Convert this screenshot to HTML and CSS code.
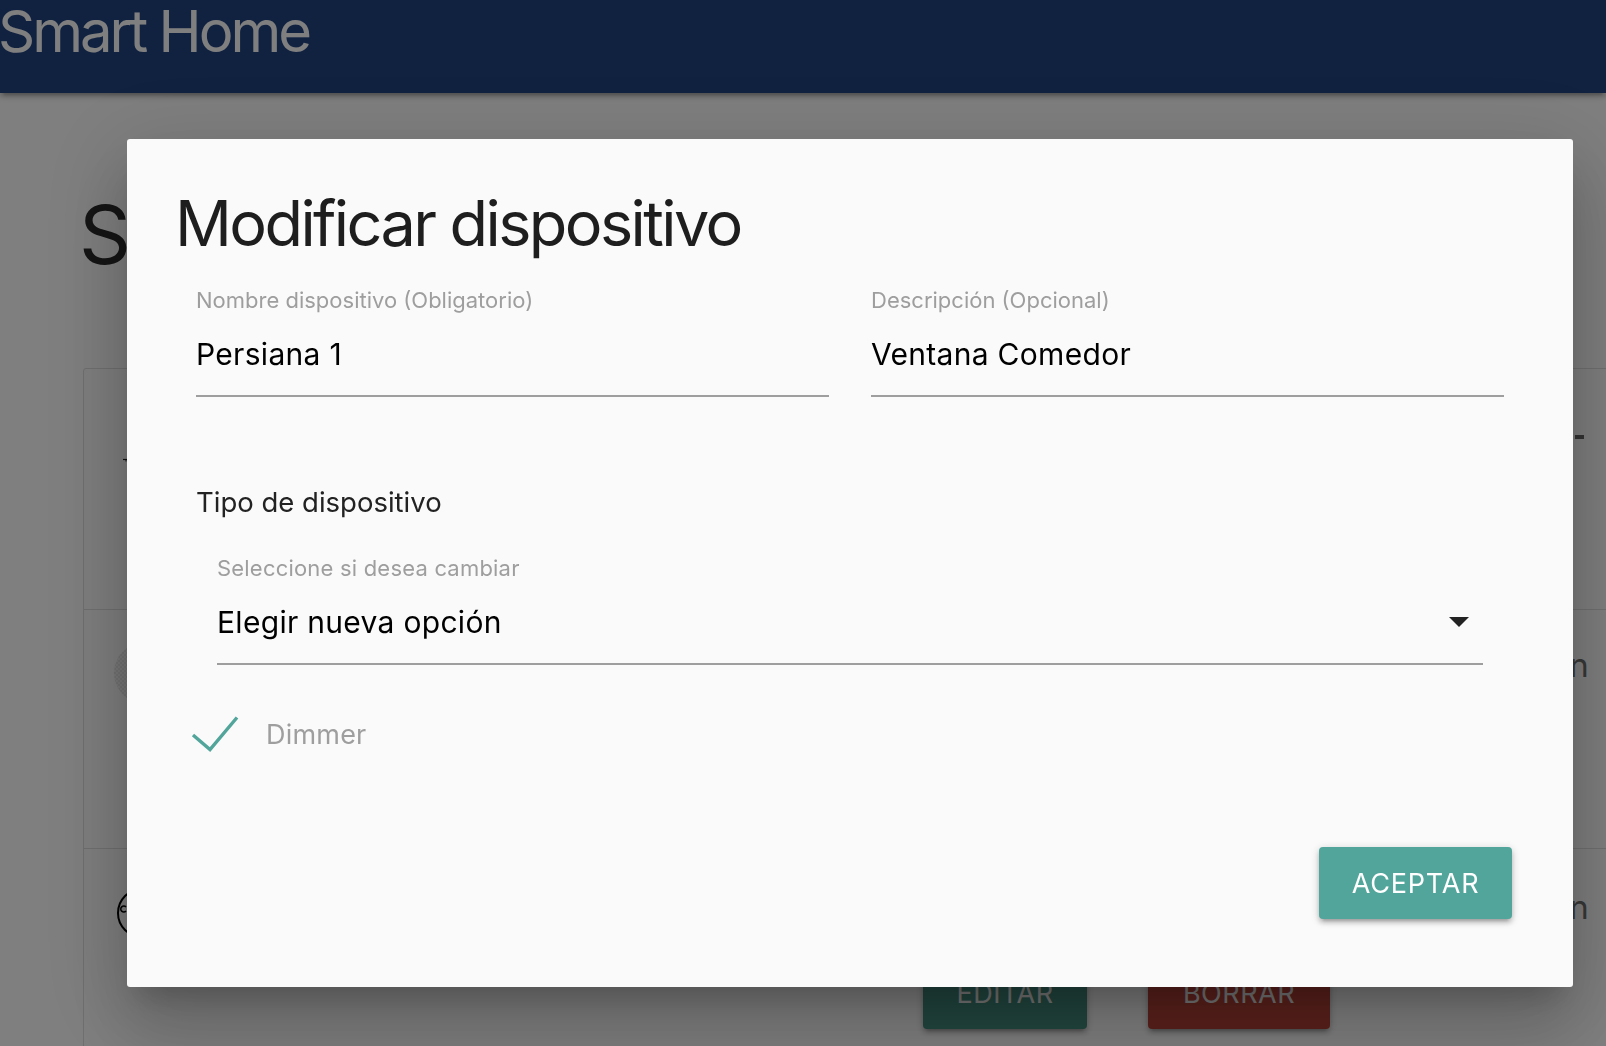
FILE: index.html
```html
<!DOCTYPE html>
<html lang="es">
<head>
<meta charset="utf-8">
<title>Smart Home</title>
<link rel="stylesheet" href="styles.css">
</head>
<body>
<header class="navbar">
  <span class="brand">Smart Home</span>
</header>
<main class="page">
  <h1 class="page-title">Smart Home</h1>
  <div class="collection">
    <div class="item item-first">
      <div class="item-left"><svg class="stub" width="12" height="4" viewBox="0 0 12 4"><path d="M0 1.5h12" stroke="#222" stroke-width="1.2"/><path d="M3 1.5v2" stroke="#222" stroke-width="1"/></svg></div>
      <div class="item-main"></div>
      <div class="item-right"><span class="lever"></span></div>
    </div>
    <div class="item item-second">
      <div class="item-left"><span class="avatar"></span></div>
      <div class="item-main"></div>
      <div class="item-right"><span class="state">On</span></div>
    </div>
    <div class="item item-third">
      <div class="item-left"><svg class="device-icon" width="52" height="52" viewBox="0 0 52 52"><circle cx="26" cy="26" r="24" fill="none" stroke="#000" stroke-width="2"/><path d="M10 20a3 3 0 1 0 0 4" fill="none" stroke="#000" stroke-width="1.5"/></svg></div>
      <div class="item-main">
        <div class="item-actions">
          <span class="btn btn-edit">EDITAR</span>
          <span class="btn btn-delete">BORRAR</span>
        </div>
      </div>
      <div class="item-right"><span class="state">On</span></div>
    </div>
  </div>
</main>

<div class="overlay"></div>

<div class="modal">
  <div class="modal-content">
    <h4 class="modal-title">Modificar dispositivo</h4>
    <div class="form">
      <div class="field-row">
        <div class="field">
          <label class="field-label">Nombre dispositivo (Obligatorio)</label>
          <div class="field-input">Persiana 1</div>
        </div>
        <div class="field">
          <label class="field-label">Descripción (Opcional)</label>
          <div class="field-input">Ventana Comedor</div>
        </div>
      </div>
      <div class="section-label">Tipo de dispositivo</div>
      <div class="select-wrap">
        <label class="field-label select-label">Seleccione si desea cambiar</label>
        <div class="select">
          <span class="select-value">Elegir nueva opción</span>
          <svg class="caret" width="20" height="10" viewBox="0 0 20 10"><path d="M0 0h20L10 10z" fill="#222"/></svg>
        </div>
      </div>
      <div class="check-row">
        <svg class="check" width="50" height="40" viewBox="0 0 50 40"><polyline points="3,21 20,35.5 47,3.5" fill="none" stroke="#52a59b" stroke-width="3.4"/></svg>
        <span class="check-label">Dimmer</span>
      </div>
    </div>
  </div>
  <div class="modal-footer">
    <span class="btn btn-accept">ACEPTAR</span>
  </div>
</div>
</body>
</html>
```
FILE: styles.css
```css
html, body {
  margin: 0;
  padding: 0;
  overflow: hidden;
  height: 100%;
}
body {
  background: #fff;
  font-family: "Inter", "Roboto", "Noto Sans", sans-serif;
  color: #222;
}

/* ---------- background page ---------- */
.navbar {
  height: 94px;
  background: #224480;
  box-shadow: 0 4px 4px 0 rgba(0,0,0,.14), 0 6px 2px -4px rgba(0,0,0,.12), 0 2px 9px 0 rgba(0,0,0,.2);
  position: relative;
  z-index: 1;
}
.brand {
  display: block;
  color: #fff;
  font-size: 58px;
  line-height: 64px;
  margin-top: -1px;
  margin-left: -2px;
  letter-spacing: -3px;
}
.page {
  padding-left: 83px;
}
.page-title {
  margin: 0 0 0 -4px;
  padding-top: 94px;
  font-size: 81px;
  line-height: 96px;
  font-weight: 400;
  color: #2a2a2a;
  height: 181px;
  letter-spacing: -2px;
}
.collection {
  width: 1600px;
  border: 1px solid #e0e0e0;
  border-radius: 3px;
}
.item {
  display: grid;
  grid-template-columns: 100px 1fr 109px;
  border-bottom: 1px solid #e0e0e0;
}
.item-first { height: 240px; }
.item-second { height: 238px; }
.item-third { height: 240px; }
.item-left { padding-left: 30px; }
.stub { display: block; margin-top: 89px; margin-left: 9px; }
.lever {
  display: block;
  width: 9px;
  height: 4px;
  background: #666;
  margin-top: 66px;
}
.avatar {
  display: block;
  width: 62px;
  height: 62px;
  border-radius: 50%;
  margin-top: 32px;
  background: repeating-conic-gradient(#e6e6e6 0 25%, #f4f4f4 0 50%) 0 0 / 4px 4px;
}
.state {
  display: block;
  font-size: 33px;
  line-height: 40px;
  color: #707070;
  margin-left: -31px;
  margin-top: 35px;
}
.item-third .state { margin-top: 38px; }
.device-icon { display: block; margin-top: 38px; margin-left: 2px; }
.item-actions {
  display: flex;
  gap: 61px;
  padding-left: 739px;
  padding-top: 108px;
}
.btn {
  display: inline-flex;
  align-items: center;
  justify-content: center;
  height: 72px;
  border-radius: 4px;
  font-size: 27px;
  letter-spacing: 0.5px;
  color: #eee;
  box-shadow: 0 4px 4px 0 rgba(0,0,0,.14), 0 6px 2px -4px rgba(0,0,0,.12), 0 2px 9px 0 rgba(0,0,0,.2);
}
.btn-edit { width: 164px; background: #448c7e; }
.btn-delete { width: 182px; background: #b84238; }

/* ---------- overlay + modal ---------- */
.overlay {
  position: fixed;
  inset: 0;
  background: rgba(0,0,0,.5);
  z-index: 2;
}
.modal {
  position: fixed;
  left: 127px;
  top: 139px;
  width: 1446px;
  height: 848px;
  background: #fafafa;
  border-radius: 3px;
  z-index: 3;
  display: flex;
  flex-direction: column;
  box-shadow: 0 45px 71px 6px rgba(0,0,0,.14), 0 17px 86px 15px rgba(0,0,0,.12), 0 21px 28px -13px rgba(0,0,0,.2);
}
.modal-content {
  padding: 46px 51px 0;
}
.modal-title {
  margin: 0 0 0 -3px;
  font-size: 63px;
  line-height: 76px;
  font-weight: 400;
  color: #1e1e1e;
  letter-spacing: -2.6px;
}
.form {
  padding: 0 18px;
}
.field-row {
  display: grid;
  grid-template-columns: 1fr 1fr;
  column-gap: 42px;
  margin-top: 24px;
}
.field-label {
  display: block;
  font-size: 22px;
  line-height: 30px;
  color: #9e9e9e;
  letter-spacing: 0;
}
.select-label { letter-spacing: 0.2px; }
.field-input {
  margin-top: 19px;
  font-size: 30px;
  line-height: 40px;
  color: #000;
  letter-spacing: 0.3px;
  padding-bottom: 21px;
  border-bottom: 2px solid #9e9e9e;
}
.section-label {
  margin-top: 87px;
  font-size: 27.5px;
  line-height: 36px;
  color: #222;
}
.select-wrap {
  margin-top: 33px;
  padding: 0 21px;
}
.select {
  margin-top: 19px;
  display: flex;
  align-items: center;
  justify-content: space-between;
  padding-bottom: 21px;
  border-bottom: 2px solid #9e9e9e;
}
.select-value {
  font-size: 30px;
  line-height: 40px;
  letter-spacing: 0.3px;
  color: #000;
}
.caret { display: block; margin-right: 14px; }
.check-row {
  margin-top: 50px;
  display: flex;
  align-items: center;
  height: 36px;
}
.check {
  display: block;
  margin-left: -6px;
  margin-top: 2px;
}
.check-label {
  margin-left: 26px;
  margin-top: 4px;
  font-size: 27px;
  line-height: 36px;
  letter-spacing: 0.2px;
  color: #9e9e9e;
}
.modal-footer {
  margin-top: auto;
  display: flex;
  justify-content: flex-end;
  padding: 0 61px 68px;
}
.btn-accept {
  width: 193px;
  background: #52a59b;
  color: #fff;
  font-size: 27px;
  letter-spacing: 0.8px;
  border-radius: 4px;
}
```
